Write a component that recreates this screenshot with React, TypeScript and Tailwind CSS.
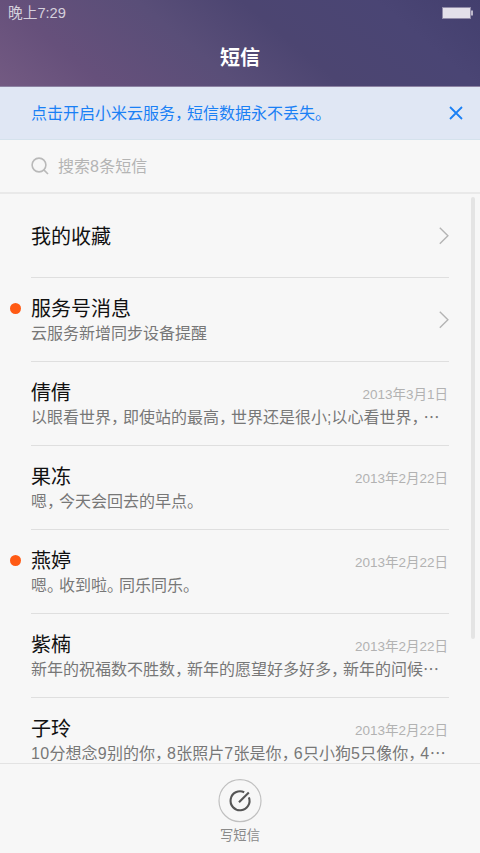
import React from "react";

const SANS = "font-['Liberation_Sans','Noto_Sans_CJK_SC',sans-serif]";

/** Sets full-width punctuation in a narrower cell and the ellipsis in the CJK face. */
function Copy({ text }: { text: string }) {
  return (
    <>
      {text.split(/([，。…]|\d+)/).map((part, i) => {
        if (part === "…")
          return (
            <span key={i} className="font-['Noto_Sans_CJK_SC',sans-serif] leading-none">
              …
            </span>
          );
        if (part === "，" || part === "。")
          return (
            <span key={i} className="tracking-[-4px]">
              {part}
            </span>
          );
        if (/^\d+$/.test(part))
          return (
            <span key={i} className="tracking-[0.4px]">
              {part}
            </span>
          );
        return part;
      })}
    </>
  );
}

function Chevron() {
  return (
    <svg className="h-[18px] w-[11px] shrink-0" viewBox="0 0 11 18" fill="none" stroke="#b4b4b4" strokeWidth="1.4">
      <path d="M1.8 0.7 9.9 8.7 1.8 16.7" />
    </svg>
  );
}

type Thread = { name: string; body: string; date?: string; unread?: boolean };

const threads: Thread[] = [
  { name: "服务号消息", body: "云服务新增同步设备提醒", unread: true },
  { name: "倩倩", body: "以眼看世界，即使站的最高，世界还是很小;以心看世界，…", date: "2013年3月1日" },
  { name: "果冻", body: "嗯，今天会回去的早点。", date: "2013年2月22日" },
  { name: "燕婷", body: "嗯。收到啦。同乐同乐。", date: "2013年2月22日", unread: true },
  { name: "紫楠", body: "新年的祝福数不胜数，新年的愿望好多好多，新年的问候…", date: "2013年2月22日" },
  { name: "子玲", body: "10分想念9别的你，8张照片7张是你，6只小狗5只像你，4…", date: "2013年2月22日" },
];

function ThreadRow({ name, body, date, unread }: Thread) {
  return (
    <li className="flex h-[84px] shrink-0 pr-[22px]">
      <div className="flex w-[31px] shrink-0 justify-center pt-[25px]">
        {unread && <span className="size-[11px] rounded-full bg-[#ff5a14]" />}
      </div>
      <div className="flex min-w-0 flex-1 items-center border-b border-[#dfdfdf]">
        <div className="h-full min-w-0 flex-1 pt-[17px]">
          <div className="flex items-center justify-between">
            <h2 className="text-[20px] leading-7 text-[#111]">{name}</h2>
            {date && <time className="pt-1 pr-px text-[13.5px] leading-6 text-[#b2b2b2]">{date}</time>}
          </div>
          <p className="text-[16px] leading-[22px] whitespace-nowrap text-[#777]">
            <Copy text={body} />
          </p>
        </div>
        {!date && <Chevron />}
      </div>
    </li>
  );
}

export default function App() {
  return (
    <div lang="zh-CN" className={`flex h-[853px] w-[480px] flex-col overflow-hidden bg-[#f7f7f7] ${SANS}`}>
      <header className="flex h-[87px] shrink-0 flex-col border-b border-[#8d83a3] bg-[linear-gradient(40deg,#735a82_0%,#66507b_18%,#594e78_41%,#4c4571_59%,#4a4574_82%,#433f6e_100%)]">
        <div className="flex h-[26px] shrink-0 items-center justify-between pr-[7px] pl-2">
          <span className="text-[14.7px] leading-5 text-[#d5d0dc]">晚上7:29</span>
          <svg className="h-3 w-[31px]" viewBox="0 0 31 12">
            <rect x="0.5" y="0.5" width="28" height="11" fill="#e3e0ea" stroke="#918ba9" />
            <rect x="29" y="3.5" width="2" height="5" fill="#bcb7ca" />
          </svg>
        </div>
        <h1 className="pt-2 text-center text-[20px] leading-[48px] font-bold text-white">短信</h1>
      </header>

      <div className="flex h-[53px] shrink-0 items-center justify-between border-b border-[#d5e2ec] bg-[#e0e7f4] pr-[17px] pl-[31px]">
        <p className="pt-[2px] text-[16px] leading-6 text-[#1a80f5]">
          <Copy text="点击开启小米云服务，短信数据永不丢失。" />
        </p>
        <svg className="size-[14px]" viewBox="0 0 14 14" stroke="#1a80f5" strokeWidth="1.8">
          <path d="M1 1 13 13M13 1 1 13" />
        </svg>
      </div>

      <div className="flex h-[54px] shrink-0 items-center gap-[9px] border-b-2 border-[#e9e9e9] pl-[31px] text-[16px] text-[#b4b4b4]">
        <svg className="size-[18px]" viewBox="0 0 18 18" fill="none" stroke="#b9b9b9" strokeWidth="1.6">
          <circle cx="8" cy="8" r="6.9" />
          <path d="M12.6 12.6 17 17" />
        </svg>
        <span className="pt-[2px]">
          <Copy text="搜索8条短信" />
        </span>
      </div>

      <main className="flex min-h-0 flex-1 overflow-hidden">
        <ul className="flex w-[471px] shrink-0 flex-col">
          <li className="mr-[22px] ml-[31px] flex h-[84px] shrink-0 items-center justify-between border-b border-[#dfdfdf]">
            <h2 className="pt-[2px] text-[20px] text-[#111]">我的收藏</h2>
            <Chevron />
          </li>
          {threads.map((t) => (
            <ThreadRow key={t.name} {...t} />
          ))}
        </ul>
        <div className="mt-[3px] h-[442px] w-[4px] rounded-full bg-[#e4e4e4]" />
      </main>

      <footer className="flex h-[90px] shrink-0 flex-col items-center border-t border-[#e3e3e3] pt-[15px]">
        <svg className="size-[44px]" viewBox="0 0 44 44" fill="none">
          <circle cx="22" cy="21.7" r="21" stroke="#c0c0c0" strokeWidth="1.2" />
          <path d="M26.2 13.2A9.5 9.5 0 1 0 30.9 18.3" stroke="#555" strokeWidth="2.1" />
          <path d="M21 23.2 30.8 13.4" stroke="#555" strokeWidth="2.1" />
        </svg>
        <span className="mt-[3px] text-[13.3px] leading-5 text-[#8a8a8a]">写短信</span>
      </footer>
    </div>
  );
}
